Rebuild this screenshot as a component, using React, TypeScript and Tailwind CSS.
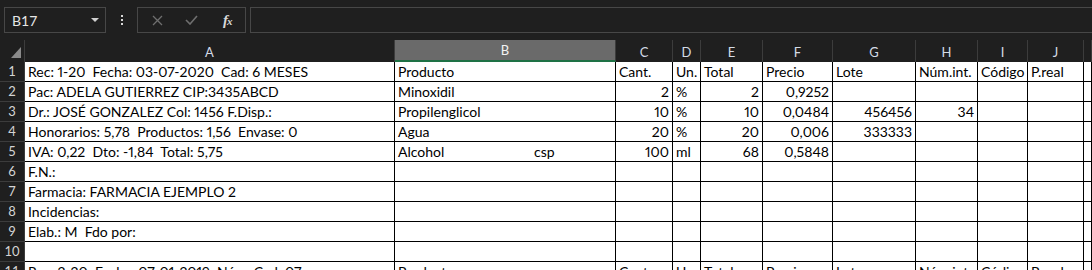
const COLS = ["A", "B", "C", "D", "E", "F", "G", "H", "I", "J", ""];

type Cell = { v: string; r?: boolean };

const ROWS: Cell[][] = [
  [
    { v: "Rec: 1-20  Fecha: 03-07-2020  Cad: 6 MESES" },
    { v: "Producto" },
    { v: "Cant." },
    { v: "Un." },
    { v: "Total" },
    { v: "Precio" },
    { v: "Lote" },
    { v: "Núm.int." },
    { v: "Código" },
    { v: "P.real" },
  ],
  [
    { v: "Pac: ADELA GUTIERREZ CIP:3435ABCD" },
    { v: "Minoxidil" },
    { v: "2", r: true },
    { v: "%" },
    { v: "2", r: true },
    { v: "0,9252", r: true },
  ],
  [
    { v: "Dr.: JOSÉ GONZALEZ Col: 1456 F.Disp.:" },
    { v: "Propilenglicol" },
    { v: "10", r: true },
    { v: "%" },
    { v: "10", r: true },
    { v: "0,0484", r: true },
    { v: "456456", r: true },
    { v: "34", r: true },
  ],
  [
    { v: "Honorarios: 5,78  Productos: 1,56  Envase: 0" },
    { v: "Agua" },
    { v: "20", r: true },
    { v: "%" },
    { v: "20", r: true },
    { v: "0,006", r: true },
    { v: "333333", r: true },
  ],
  [
    { v: "IVA: 0,22  Dto: -1,84  Total: 5,75" },
    { v: "csp" },
    { v: "100", r: true },
    { v: "ml" },
    { v: "68", r: true },
    { v: "0,5848", r: true },
  ],
  [{ v: "F.N.:" }],
  [{ v: "Farmacia: FARMACIA EJEMPLO 2" }],
  [{ v: "Incidencias:" }],
  [{ v: "Elab.: M  Fdo por:" }],
  [],
  [
    { v: "Rec: 2-20  Fecha: 07-01-2019  Núm. Cad: 07" },
    { v: "Producto" },
    { v: "Cant." },
    { v: "Un." },
    { v: "Total" },
    { v: "Precio" },
    { v: "Lote" },
    { v: "Núm.int." },
    { v: "Código" },
    { v: "P.real" },
  ],
];

function FormulaBar() {
  return (
    <div className="h-[40px] flex items-start pt-[7px] pl-[4px]">
      {/* Name box */}
      <div className="w-[102px] h-[26px] border border-[#474747] flex items-center justify-between pl-[7px] pr-[6px] text-[14px] text-[#e6e6e6]">
        <span>B17</span>
        <svg width="8" height="4" viewBox="0 0 8 4">
          <path d="M0 0h8L4 4z" fill="#d0d0d0" />
        </svg>
      </div>
      {/* dots */}
      <div className="w-[31px] h-[26px] flex flex-col items-center justify-center gap-[2px]">
        <span className="w-[2px] h-[2px] bg-[#d8d8d8]" />
        <span className="w-[2px] h-[2px] bg-[#d8d8d8]" />
        <span className="w-[2px] h-[2px] bg-[#d8d8d8]" />
      </div>
      {/* cancel / enter / fx */}
      <div className="w-[109px] h-[26px] border border-[#474747] flex items-center">
        <div className="w-[36px] flex justify-center pl-[4px]">
          <svg width="11" height="11" viewBox="0 0 11 11">
            <path d="M1 1l9 9M10 1l-9 9" stroke="#6f6f6f" strokeWidth="1.3" />
          </svg>
        </div>
        <div className="w-[36px] flex justify-center">
          <svg width="13" height="10" viewBox="0 0 13 10">
            <path d="M1 5l4 4 7-8" stroke="#6f6f6f" strokeWidth="1.6" fill="none" />
          </svg>
        </div>
        <div className="w-[36px] flex justify-center">
          <span className="font-['Liberation_Serif',serif] italic text-[15px] leading-none text-[#d8d8d8] font-bold tracking-[-1px]">
            f<span className="text-[11px]">x</span>
          </span>
        </div>
      </div>
      {/* formula input */}
      <div className="ml-[4px] flex-1 h-[26px] border border-r-0 border-[#474747]" />
    </div>
  );
}

export default function App() {
  return (
    <div className="w-[1092px] h-[270px] overflow-hidden bg-[#1f1f1f] font-['Lato',sans-serif]">
      <FormulaBar />
      <div className="grid grid-cols-[25px_370px_221px_57px_28px_62px_70px_83px_62px_50px_56px_1fr]">
        {/* column headers */}
        <div className="h-[22px] border-r border-[#3c3c3c] relative">
          <svg className="absolute right-[3px] bottom-[4px]" width="10" height="11" viewBox="0 0 10 11">
            <path d="M10 0v11H0z" fill="#8a8a8a" />
          </svg>
        </div>
        {COLS.map((c, i) =>
          c === "B" ? (
            <div
              key={i}
              className="h-[22px] bg-[#6a6a6a] border-b-2 border-[#1e7145] border-r border-r-[#3c3c3c] flex items-center justify-center pt-[2px] text-[13px] text-[#f2f2f2]"
            >
              {c}
            </div>
          ) : (
            <div
              key={i}
              className="h-[22px] border-r border-[#3c3c3c] flex items-center justify-center pt-[3px] text-[13px] text-[#d4dbe6]"
            >
              {c}
            </div>
          )
        )}

        {/* data rows */}
        {ROWS.map((row, ri) => (
          <>
            <div
              key={"h" + ri}
              className="h-[20px] border-b border-r border-[#3c3c3c] flex items-center justify-center text-[13px] text-[#d4d4d4]"
            >
              {ri + 1}
            </div>
            {COLS.map((_, ci) => {
              const cell = row[ci];
              const isAlcohol = ri === 4 && ci === 1;
              return (
                <div
                  key={ri + "-" + ci}
                  className={
                    "h-[20px] bg-white border-r border-b border-black flex items-end pb-[1px] px-[3px] text-[14px] leading-[17px] text-black whitespace-pre overflow-hidden proportional-nums " +
                    (cell?.r ? "justify-end" : "justify-start")
                  }
                >
                  {isAlcohol ? (
                    <>
                      <span className="inline-block w-[136px]">Alcohol</span>
                      <span>csp</span>
                    </>
                  ) : (
                    cell?.v ?? ""
                  )}
                </div>
              );
            })}
          </>
        ))}
      </div>
    </div>
  );
}
